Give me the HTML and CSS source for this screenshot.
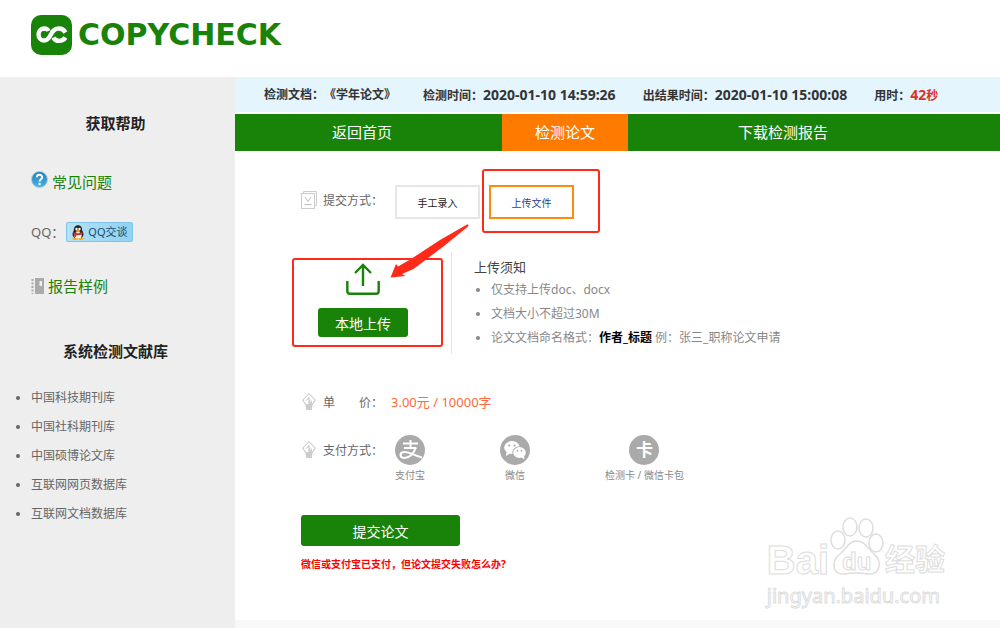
FILE: index.html
```html
<!DOCTYPE html>
<html lang="zh-CN">
<head>
    <meta charset="UTF-8">
    <meta name="viewport" content="width=device-width, initial-scale=1.0">
    <title>CopyCheck</title>
    <link rel="stylesheet" href="styles.css">
</head>
<body>
    <header class="header">
        <a href="#" class="logo">
            <svg class="logo-mark" viewBox="0 0 41 40" aria-hidden="true">
                <rect width="41" height="40" rx="10" fill="#188209"/>
                <g fill="none" stroke="#fff" stroke-width="4.4">
                    <path d="M17.500 16C16.500 13.500 13.500 13.500 13 13.500C5.500 14 6 25.500 13 25.500C21 25.500 18.500 13.500 27.500 13.500C30.500 13.300 33 15 34.500 17.500"/>
                    <path d="M22.500 22.500C24.500 27 31.500 27 34.500 22.500"/>
                </g>
            </svg>
            <span>COPYCHECK</span>
        </a>
    </header>

    <div class="page">
        <aside class="sidebar">
            <h2>获取帮助</h2>
            <p class="help help-faq">
                <svg width="17" height="17" viewBox="0 0 17 17" aria-hidden="true">
                    <defs>
                        <linearGradient id="ball" x1="0" y1="0" x2="0" y2="1">
                            <stop offset="0" stop-color="#2b7db4"/>
                            <stop offset="1" stop-color="#45b4e8"/>
                        </linearGradient>
                    </defs>
                    <circle cx="8.500" cy="8.500" r="8" fill="url(#ball)" stroke="#a9cfe4"/>
                    <path d="M5.800 6.300C5.800 2.900 11.300 3 11.200 6.200C11.100 8.300 8.600 8.200 8.600 10.500" fill="none" stroke="#fff" stroke-width="1.900"/>
                    <circle cx="8.600" cy="13" r="1.200" fill="#fff"/>
                </svg>
                <a href="#">常见问题</a>
            </p>
            <p class="help help-qq">
                <span>QQ：</span>
                <a href="#" class="qq-btn">
                    <svg width="14" height="15" viewBox="0 0 14 15" aria-hidden="true">
                        <ellipse cx="7" cy="9" rx="5.500" ry="5" fill="#222"/>
                        <ellipse cx="7" cy="5" rx="4.200" ry="4.800" fill="#222"/>
                        <ellipse cx="7" cy="10.500" rx="3.600" ry="3.500" fill="#fff"/>
                        <circle cx="5.500" cy="4" r="1.200" fill="#fff"/>
                        <circle cx="8.500" cy="4" r="1.200" fill="#fff"/>
                        <ellipse cx="7" cy="6" rx="2.400" ry="0.900" fill="#f6a623"/>
                        <path d="M2.500 7Q7 9.500 11.500 7L11.800 9Q7 11 5.500 10L5 12L3.400 11.500L3.500 9.500L2.200 9Z" fill="#e2281c"/>
                        <ellipse cx="4" cy="13.800" rx="2.800" ry="1.100" fill="#f6a623"/>
                        <ellipse cx="10" cy="13.800" rx="2.800" ry="1.100" fill="#f6a623"/>
                    </svg>
                    QQ交谈
                </a>
            </p>
            <p class="help help-report">
                <svg width="13" height="16" viewBox="0 0 13 16" aria-hidden="true">
                    <path d="M4 0H13V16H4Z" fill="#aaa"/>
                    <path d="M1.500 1V16" stroke="#aaa" stroke-width="2" stroke-dasharray="2 1.500"/>
                    <path d="M8.500 3H11V8H8.500Z" fill="#eee"/>
                </svg>
                <a href="#">报告样例</a>
            </p>

            <h2 class="library-title">系统检测文献库</h2>
            <ul class="library">
                <li>中国科技期刊库</li>
                <li>中国社科期刊库</li>
                <li>中国硕博论文库</li>
                <li>互联网网页数据库</li>
                <li>互联网文档数据库</li>
            </ul>
        </aside>

        <main class="main">
            <div class="status">
                <span>检测文档：《学年论文》</span>
                <span>检测时间：<b>2020-01-10 14:59:26</b></span>
                <span>出结果时间：<b>2020-01-10 15:00:08</b></span>
                <span>用时：<em><b>42</b>秒</em></span>
            </div>
            <nav class="nav">
                <a href="#" class="nav-home">返回首页</a>
                <a href="#" class="active">检测论文</a>
                <a href="#" class="nav-report">下载检测报告</a>
            </nav>

            <form class="content">
                <div class="row row-mode">
                    <span class="label">
                        <svg width="16" height="18" viewBox="0 0 16 18" fill="none" stroke="#ccc" aria-hidden="true">
                            <path d="M2.500 2.500V0.500H15.500V14.500H13.500"/>
                            <rect x="0.500" y="2.500" width="13" height="15"/>
                            <path d="M4 6L7 10.500L10 6M3.500 13.500H10.500" stroke="#bbb"/>
                        </svg>
                        提交方式：
                    </span>
                    <button type="button" class="tab">手工录入</button>
                    <div class="tab-wrap">
                        <button type="button" class="tab tab-active">上传文件</button>
                        <div class="mark mark-tab"></div>
                        <svg class="arrow" width="80" height="56" viewBox="0 0 80 56" aria-hidden="true">
                            <path d="M77 0.500Q79.500 0 78 2.500L54 22L23.500 45L12 50L15.500 52L0.500 53.500L6 40L8 42.500L21 35L50 16Z" fill="#ff2a1a"/>
                        </svg>
                    </div>
                </div>

                <div class="upload">
                    <div class="upload-box">
                        <svg width="34" height="32" viewBox="0 0 34 32" fill="none" stroke="#188209" stroke-width="2.400" aria-hidden="true">
                            <path d="M17 23V2M9 10L17 2L25 10"/>
                            <path d="M1.300 18V28Q1.300 30.700 4 30.700H30Q32.700 30.700 32.700 28V18"/>
                        </svg>
                        <button type="button" class="btn btn-upload">本地上传</button>
                        <div class="mark mark-upload"></div>
                    </div>
                    <div class="notice">
                        <h3>上传须知</h3>
                        <ul>
                            <li>仅支持上传doc、docx</li>
                            <li>文档大小不超过30M</li>
                            <li>论文文档命名格式：<strong>作者_标题</strong> 例：张三_职称论文申请</li>
                        </ul>
                    </div>
                </div>

                <div class="row row-price">
                    <span class="label">
                        <svg width="14" height="18" viewBox="0 0 14 18" fill="none" stroke="#bbb" aria-hidden="true">
                            <path d="M7 0.700L13.300 7L10 12H4L0.700 7Z"/>
                            <path d="M4 7.500L7 4.500V9.500L9 7.500M3.500 13.500H10.500M4.500 16H10"/>
                            <path d="M4 12L10 8V17H4Z" fill="#ccc" stroke="none"/>
                        </svg>
                        单　　价：
                    </span>
                    <span class="price">3.00元 / 10000字</span>
                </div>

                <div class="row row-pay">
                    <span class="label">
                        <svg width="14" height="18" viewBox="0 0 14 18" fill="none" stroke="#bbb" aria-hidden="true">
                            <path d="M7 0.700L13.300 7L10 12H4L0.700 7Z"/>
                            <path d="M4 7.500L7 4.500V9.500L9 7.500M3.500 13.500H10.500M4.500 16H10"/>
                            <path d="M4 12L10 8V17H4Z" fill="#ccc" stroke="none"/>
                        </svg>
                        支付方式：
                    </span>
                    <div class="pays">
                        <button type="button" class="pay">
                            <svg width="30" height="30" viewBox="0 0 30 30" aria-hidden="true">
                                <circle cx="15" cy="15" r="15" fill="#aaa"/>
                                <g fill="none" stroke="#fff" stroke-width="2">
                                    <path d="M8 8.500H23M15.500 5V13M9 13H21.500"/>
                                    <path d="M20.500 13C19 18.500 14.500 23 9.500 23C4.500 23 4 17.500 9 17C14 16.600 19 20.500 27 22.500"/>
                                </g>
                            </svg>
                            支付宝
                        </button>
                        <button type="button" class="pay">
                            <svg width="30" height="30" viewBox="0 0 30 30" aria-hidden="true">
                                <circle cx="15" cy="15" r="15" fill="#aaa"/>
                                <path d="M6.500 17L6 21L10 18.500Z" fill="#fff"/>
                                <ellipse cx="12" cy="12.500" rx="7.800" ry="6.500" fill="#fff"/>
                                <ellipse cx="19.500" cy="17.500" rx="7.200" ry="6.200" fill="#aaa"/>
                                <ellipse cx="19.500" cy="17.500" rx="6.300" ry="5.400" fill="#fff"/>
                                <path d="M21 22L24.500 24.500L24 20Z" fill="#fff"/>
                                <g fill="#aaa">
                                    <circle cx="9.300" cy="10.500" r="1.100"/>
                                    <circle cx="14.500" cy="10.500" r="1.100"/>
                                    <circle cx="17.500" cy="15.800" r="0.900"/>
                                    <circle cx="21.600" cy="15.800" r="0.900"/>
                                </g>
                            </svg>
                            微信
                        </button>
                        <button type="button" class="pay">
                            <span class="pay-card">卡</span>
                            检测卡 / 微信卡包
                        </button>
                    </div>
                </div>

                <button type="submit" class="btn btn-submit">提交论文</button>
                <a href="#" class="fail-link">微信或支付宝已支付，但论文提交失败怎么办?</a>
            </form>

            <div class="watermark">
                <div class="watermark-brand">
                    <span>Bai</span>
                    <span class="paw">
                        <svg width="56" height="60" viewBox="0 0 56 60" fill="#fff" stroke="#ddd" stroke-width="1.500" aria-hidden="true">
                            <ellipse cx="9" cy="24" rx="7" ry="9"/>
                            <ellipse cx="21" cy="11" rx="7" ry="9"/>
                            <ellipse cx="37" cy="12" rx="7" ry="9"/>
                            <ellipse cx="47" cy="27" rx="7" ry="9"/>
                            <path d="M27 25C20 25 17 33 11 38C1 46 4 59 15 58Q27 56 39 58C51 59 54 46 45 38C38 32 36 25 27 25Z"/>
                        </svg>
                        <i>du</i>
                    </span>
                    <span class="watermark-cn">经验</span>
                </div>
                <div class="watermark-url">jingyan.baidu.com</div>
            </div>
        </main>
    </div>
</body>
</html>
```
FILE: styles.css
```css
* {
    box-sizing: border-box;
}

body {
    margin: 0;
    min-height: 100vh;
    display: flex;
    flex-direction: column;
    background-color: #fff;
    color: #666;
    font-family: "Noto Sans", "Noto Sans CJK SC", sans-serif;
    font-size: 12px;
    text-spacing-trim: space-all;
}

h2, h3, p, ul {
    margin: 0;
    padding: 0;
}

a {
    color: #188209;
    text-decoration: none;
}

button {
    font-family: inherit;
    padding: 0;
    cursor: pointer;
}

svg {
    flex: none;
}

.header {
    height: 77px;
    padding: 15px 31px;
}

.logo {
    display: inline-flex;
    align-items: center;
    gap: 6px;
    font-family: "DejaVu Sans", sans-serif;
    font-size: 30px;
    font-weight: bold;
    line-height: 40px;
}

.logo-mark {
    width: 41px;
    height: 40px;
}

.page {
    flex: 1;
    display: flex;
}

/* Sidebar */
.sidebar {
    width: 235px;
    flex: none;
    padding: 34px 0 20px;
    background-color: #eee;
}

.sidebar h2 {
    color: #222;
    font-size: 15px;
    line-height: 24px;
    text-align: center;
    padding-right: 4px;
}

.help {
    display: flex;
    align-items: center;
    padding-left: 31px;
    font-size: 15px;
    line-height: 24px;
}

.help-faq {
    margin-top: 35px;
    gap: 4px;
}

.help-faq svg {
    margin-bottom: 6px;
}

.help-qq {
    margin-top: 26px;
    gap: 2px;
    font-size: 13px;
}

.help-report {
    margin-top: 30px;
    gap: 4px;
}

.qq-btn {
    display: flex;
    align-items: center;
    gap: 3px;
    height: 20px;
    padding: 0 4px;
    background: linear-gradient(90deg, #b4e2f8, #8fd2f3);
    border: 1px solid #7fc3e6;
    border-radius: 2px;
    color: #1c4a63;
    font-size: 11px;
}

.library-title {
    margin-top: 41px;
}

.library {
    margin-top: 20px;
    padding-left: 31px;
    line-height: 29px;
}

/* Main column */
.main {
    position: relative;
    flex: 1;
    border-bottom: 8px solid #f8f8f8;
}

.status {
    display: flex;
    gap: 27px;
    height: 36px;
    padding-left: 29px;
    background-color: #e4f5fe;
    border-bottom: 1px solid #fff;
    color: #333;
    font-weight: bold;
    line-height: 35px;
    white-space: nowrap;
}

.status b {
    font-size: 14px;
    font-weight: bold;
}

.status em {
    color: #d9302c;
    font-style: normal;
}

.nav {
    display: grid;
    grid-template-columns: 267px 126px 1fr;
    margin-top: 1px;
    background-color: #188209;
    font-size: 15px;
    line-height: 37px;
}

.nav a {
    color: #fff;
}

.nav .active {
    background-color: #ff7b00;
    text-align: center;
}

.nav-home {
    padding-left: 97px;
}

.nav-report {
    padding-left: 110px;
}

.content {
    padding: 34px 20px 46px 66px;
}

.row {
    display: flex;
}

.label {
    display: flex;
    align-items: center;
    gap: 6px;
    width: 94px;
    height: 30px;
    white-space: nowrap;
}

.label svg {
    width: 16px;
}

.tab {
    display: block;
    width: 85px;
    height: 34px;
    background-color: #fff;
    border: 2px solid #e6e6e6;
    color: #222;
    font-size: 10px;
}

.tab-active {
    border-color: #ff8a12;
    color: #2b3f8c;
}

.tab-wrap {
    position: relative;
    margin-left: 9px;
}

/* Red highlights over the form */
.mark {
    position: absolute;
    border: 2px solid #ff2a1a;
    border-radius: 3px;
}

.mark-tab {
    left: -7px;
    top: -16px;
    width: 118px;
    height: 64px;
    pointer-events: none;
}

.arrow {
    position: absolute;
    left: -99px;
    top: 39px;
}

.upload {
    display: flex;
    margin-top: 33px;
}

.upload-box {
    position: relative;
    display: flex;
    flex-direction: column;
    align-items: center;
    width: 151px;
    height: 102px;
    padding: 11px 26px 0 0;
    border-right: 1px solid #e6e6e6;
}

.btn {
    background-color: #188209;
    border: none;
    border-radius: 3px;
    color: #fff;
    font-size: 14px;
}

.btn-upload {
    width: 90px;
    height: 29px;
    margin-top: 13px;
}

.mark-upload {
    left: -9px;
    top: 6px;
    width: 151px;
    height: 89px;
    pointer-events: none;
}

.notice {
    padding: 3px 0 0 22px;
    color: #888;
    line-height: 24px;
}

.notice h3 {
    color: #444;
    font-size: 13px;
    font-weight: normal;
    line-height: 24px;
    margin-bottom: -1px;
}

.notice ul {
    padding-left: 17px;
}

.notice strong {
    color: #000;
}

.row-price {
    margin-top: 33px;
}

.price {
    color: #ff6a3c;
    font-size: 13px;
    line-height: 30px;
    margin-left: -4px;
}

.row-pay {
    margin-top: 18px;
}

.pays {
    display: flex;
    gap: 75px;
}

.pay {
    display: flex;
    flex-direction: column;
    align-items: center;
    background: none;
    border: none;
    color: #888;
    font-size: 10px;
    line-height: 20px;
}

.pay-card {
    width: 30px;
    height: 30px;
    border-radius: 50%;
    background-color: #aaa;
    color: #fff;
    font-size: 17px;
    font-weight: bold;
    line-height: 30px;
}

.btn-submit {
    display: block;
    width: 159px;
    height: 31px;
    margin-top: 30px;
}

.fail-link {
    display: block;
    margin-top: 8px;
    color: #f00;
    font-size: 10px;
    font-weight: bold;
    line-height: 20px;
}

.watermark {
    position: absolute;
    right: 55px;
    bottom: 11px;
    color: #fff;
    -webkit-text-stroke: 1px #ddd;
}

.watermark-brand {
    display: flex;
    align-items: flex-end;
    font-family: "Liberation Sans", "Noto Sans CJK SC", sans-serif;
    font-size: 40px;
    font-weight: bold;
    line-height: 40px;
}

.watermark-cn {
    font-size: 30px;
}

.paw {
    position: relative;
    height: 64px;
}

.paw i {
    position: absolute;
    left: 13px;
    bottom: 0;
    font-size: 24px;
    font-style: normal;
    line-height: 36px;
}

.watermark-url {
    margin-top: 3px;
    font-size: 20px;
    line-height: 26px;
}
```
